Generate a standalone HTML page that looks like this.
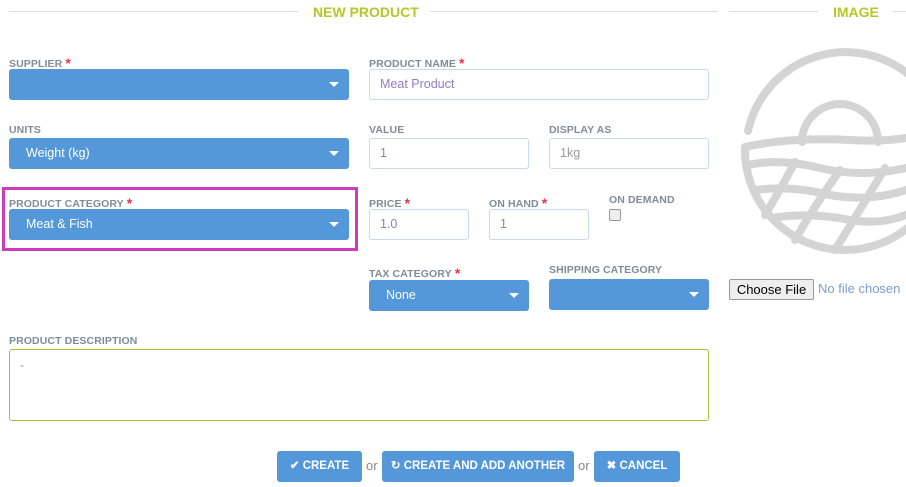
<!DOCTYPE html>
<html><head><meta charset="utf-8"><style>
*{box-sizing:border-box}
body{margin:0;width:906px;height:487px;background:#fff;position:relative;overflow:hidden;font-family:"Liberation Sans",sans-serif}
.a{position:absolute}
.line{position:absolute;height:1px;background:#d7dfea;top:11px}
.h{position:absolute;top:4px;color:#b3c72a;font-weight:bold;font-size:14px}
.lbl{position:absolute;font-size:10.5px;color:#7f8c98;font-weight:bold;letter-spacing:0.1px}
.lbl b{color:#e8354c;font-size:14px;position:relative;top:1px;margin-left:3px}
.sel{position:absolute;background:#5498da;border-radius:3px;height:31px;color:#fff;font-size:12.5px;line-height:31px;padding-left:17px}
.sel:after{content:"";position:absolute;right:10px;top:13px;border-left:5px solid transparent;border-right:5px solid transparent;border-top:5px solid #fff}
.inp{position:absolute;border:1px solid #c7d9ec;border-radius:3px;height:31px;color:#8c7fc0;font-size:12.5px;line-height:29px;padding-left:10px;background:#fff}
.btn{position:absolute;top:451px;height:31px;background:#5498da;border-radius:3px;color:#fff;font-weight:bold;font-size:11.5px;line-height:31px;text-align:center}
.or{position:absolute;top:458px;font-size:13px;color:#888}
</style></head><body>
<div class="line" style="left:9px;width:289px"></div>
<div class="h" style="left:313px">NEW PRODUCT</div>
<div class="line" style="left:430px;width:288px"></div>
<div class="line" style="left:729px;width:89px"></div>
<div class="h" style="left:833px">IMAGE</div>
<div class="line" style="left:893px;width:13px"></div>

<div class="lbl" style="left:9px;top:54px">SUPPLIER<b>*</b></div>
<div class="sel" style="left:9px;top:69px;width:340px"></div>
<div class="lbl" style="left:369px;top:54px">PRODUCT NAME<b>*</b></div>
<div class="inp" style="left:369px;top:69px;width:340px">Meat Product</div>

<div class="lbl" style="left:9px;top:124px">UNITS</div>
<div class="sel" style="left:9px;top:138px;width:340px">Weight (kg)</div>
<div class="lbl" style="left:369px;top:124px">VALUE</div>
<div class="inp" style="left:369px;top:138px;width:160px">1</div>
<div class="lbl" style="left:549px;top:124px">DISPLAY AS</div>
<div class="inp" style="left:549px;top:138px;width:160px;color:#999">1kg</div>

<div class="a" style="left:2px;top:187px;width:356px;height:64px;border:3px solid #cc3dbd"></div>
<div class="lbl" style="left:9px;top:194px">PRODUCT CATEGORY<b>*</b></div>
<div class="sel" style="left:9px;top:209px;width:340px">Meat &amp; Fish</div>
<div class="lbl" style="left:369px;top:194px">PRICE<b>*</b></div>
<div class="inp" style="left:369px;top:209px;width:100px">1.0</div>
<div class="lbl" style="left:489px;top:194px">ON HAND<b>*</b></div>
<div class="inp" style="left:489px;top:209px;width:100px">1</div>
<div class="lbl" style="left:609px;top:194px">ON DEMAND</div>
<div class="a" style="left:609px;top:209px;width:12px;height:12px;border:1px solid #999;border-radius:2px;background:#eee"></div>

<div class="lbl" style="left:369px;top:264px">TAX CATEGORY<b>*</b></div>
<div class="sel" style="left:369px;top:280px;width:160px">None</div>
<div class="lbl" style="left:549px;top:264px">SHIPPING CATEGORY</div>
<div class="sel" style="left:549px;top:279px;width:160px"></div>

<div class="a" style="left:729px;top:279px;width:85px;height:21px;border:1px solid #999;border-radius:2px;background:#eee;font-size:13px;line-height:19px;text-align:center;color:#000">Choose File</div>
<div class="a" style="left:818px;top:281px;font-size:13px;color:#7a9fd0;white-space:nowrap">No file chosen</div>

<div class="lbl" style="left:9px;top:335px">PRODUCT DESCRIPTION</div>
<div class="a" style="left:9px;top:349px;width:700px;height:72px;border:1px solid #a3c43a;border-radius:3px;color:#888;font-size:12px;padding:8px 10px">-</div>

<svg class="a" style="left:730px;top:40px" width="176" height="220" viewBox="0 0 176 220" fill="none" stroke="#d4d4d4" stroke-width="8" stroke-linecap="round">
<path d="M18 91 A100 100 0 0 1 215 100"/>
<path d="M72 102 A38 38 0 0 1 148 102"/>
<path d="M15 107 Q60 97 120 100 Q150 102 176 98"/>
<path d="M15 110 A100 100 0 0 0 215 110"/>
<path d="M18 125 Q50 118 90 128 Q130 138 176 128"/>
<path d="M26 150 Q60 145 100 155 Q140 162 176 150"/>
<path d="M42 178 Q80 172 120 180 Q150 185 176 175"/>
<path d="M65 122 Q50 150 35 175"/>
<path d="M110 130 Q85 165 65 200"/>
<path d="M155 128 Q130 170 105 210"/>
</svg>

<div class="btn" style="left:277px;width:85px">✔ CREATE</div>
<div class="or" style="left:366px">or</div>
<div class="btn" style="left:382px;width:192px">↻ CREATE AND ADD ANOTHER</div>
<div class="or" style="left:578px">or</div>
<div class="btn" style="left:594px;width:86px">✖ CANCEL</div>
</body></html>
